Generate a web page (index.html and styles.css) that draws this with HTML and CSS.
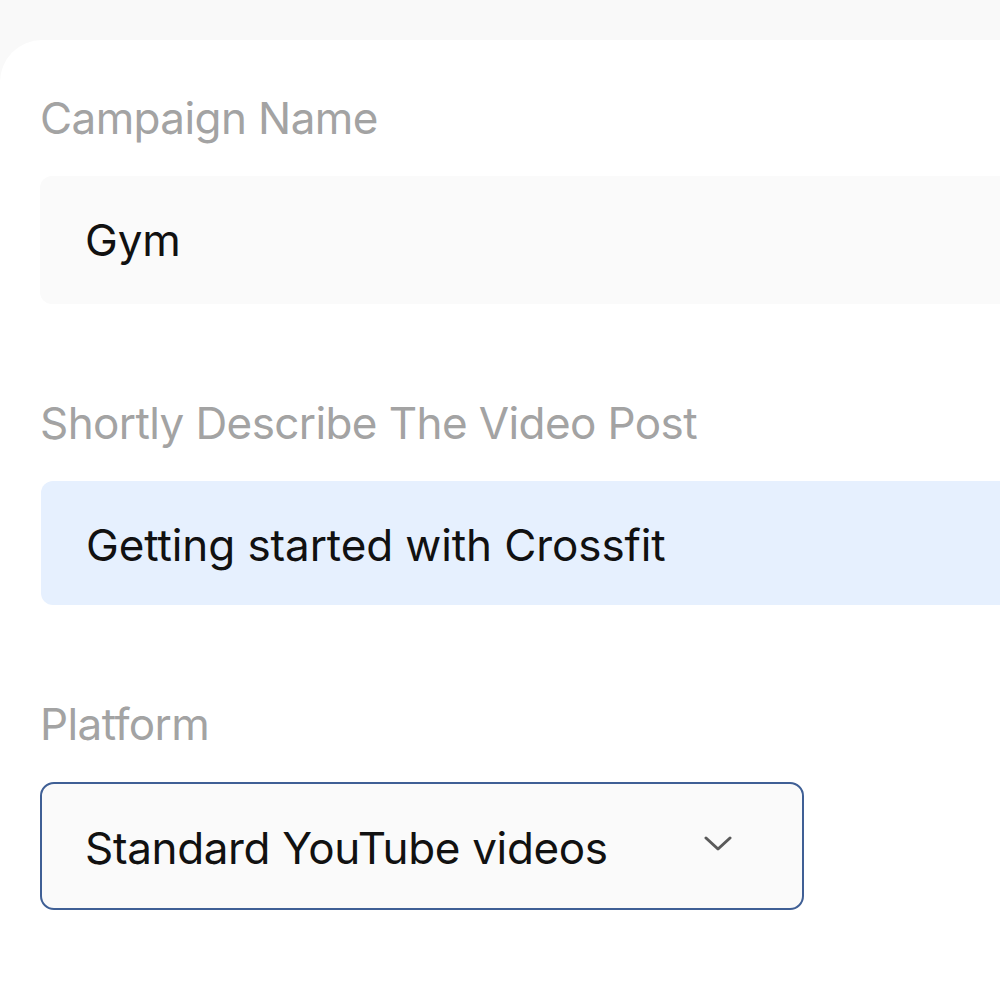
FILE: index.html
```html
<!DOCTYPE html>
<html>
<head>
<meta charset="utf-8">
<link rel="stylesheet" href="styles.css">
</head>
<body>
<div class="page">
  <div class="card">
    <div class="field">
      <div class="label">Campaign Name</div>
      <div class="input">Gym</div>
    </div>
    <div class="field">
      <div class="label">Shortly Describe The Video Post</div>
      <div class="input input-active">Getting started with Crossfit</div>
    </div>
    <div class="field">
      <div class="label">Platform</div>
      <div class="select">
        <span class="select-text">Standard YouTube videos</span>
        <svg class="chevron" width="28" height="16" viewBox="0 0 28 16">
          <path d="M2 2 L14 13 L26 2" fill="none" stroke="#5a5a5a" stroke-width="3" stroke-linecap="round" stroke-linejoin="round"/>
        </svg>
      </div>
    </div>
  </div>
</div>
</body>
</html>
```
FILE: styles.css
```css
html, body {
  margin: 0;
  padding: 0;
  background: #f9f9f9;
}
body {
  font-family: Inter, "Noto Sans", sans-serif;
  width: 1000px;
  height: 1000px;
  overflow: hidden;
}
.page {
  padding-top: 40px;
  height: 960px;
}
.card {
  background: #ffffff;
  border-top-left-radius: 42px;
  height: 960px;
  box-sizing: border-box;
  padding: 52px 0 0 40px;
  display: flex;
  flex-direction: column;
  gap: 93px;
}
.field {
  display: flex;
  flex-direction: column;
  gap: 31px;
}
.label {
  font-size: 44px;
  line-height: 53px;
  color: #a3a3a3;
  letter-spacing: -0.6px;
}
.input {
  height: 128px;
  box-sizing: border-box;
  background: #fafafa;
  border-radius: 12px 0 0 12px;
  padding-left: 45px;
  display: flex;
  align-items: center;
  font-size: 44px;
  color: #111111;
  letter-spacing: -0.1px;
}
.input-active {
  background: #e6f0fe;
  height: 124px;
  padding-top: 4px;
  margin-left: 1px;
}
.select {
  width: 764px;
  height: 128px;
  box-sizing: border-box;
  border: 2px solid #3f5f95;
  border-radius: 14px;
  background: #fafafa;
  display: flex;
  align-items: center;
  justify-content: space-between;
  padding: 4px 70px 0 43px;
  font-size: 44px;
  color: #111111;
  letter-spacing: -0.35px;
}
.chevron {
  display: block;
  margin-top: -8px;
}
```
